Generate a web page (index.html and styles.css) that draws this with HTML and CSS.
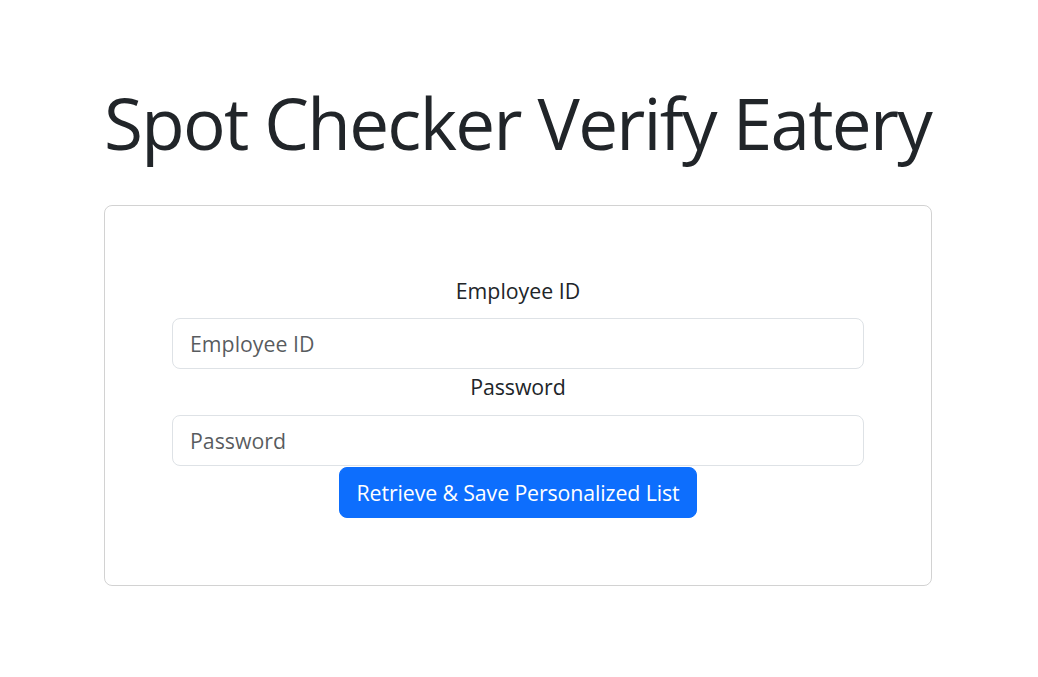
FILE: index.html
```html
<!DOCTYPE html>
<html lang="en">
<head>
<meta charset="utf-8">
<title>Spot Checker Verify Eatery</title>
<link rel="stylesheet" href="styles.css">
</head>
<body>
<main class="container">
  <h1 class="title">Spot Checker Verify Eatery</h1>
  <section class="card">
    <form class="login-form">
      <label class="form-label first" for="empid">Employee ID</label>
      <input class="form-control" id="empid" type="text" placeholder="Employee ID">
      <label class="form-label second" for="pwd">Password</label>
      <input class="form-control" id="pwd" type="password" placeholder="Password">
      <button class="btn-primary" type="button">Retrieve &amp; Save Personalized List</button>
    </form>
  </section>
</main>
</body>
</html>
```

FILE: styles.css
```css
html, body {
  margin: 0;
  padding: 0;
  background: #ffffff;
}

body {
  font-family: "Open Sans", "Noto Sans", "Liberation Sans", sans-serif;
  color: #212529;
  font-size: 21.33px;
  line-height: 1.5;
}

.container {
  width: 828px;
  margin-left: 104px;
}

.title {
  margin: 0;
  padding-top: 80px;
  font-size: 71px;
  font-weight: 400;
  line-height: 1.2;
  letter-spacing: -1.7px;
  height: 125px;
}

.card {
  box-sizing: border-box;
  border: 1px solid rgba(0, 0, 0, 0.175);
  border-radius: 8px;
  padding: 69px 67px 67px;
}

.login-form {
  display: flex;
  flex-direction: column;
  align-items: stretch;
}

.form-label {
  display: block;
  text-align: center;
  height: 32px;
  line-height: 32px;
}

.form-label.first {
  margin-bottom: 10.5px;
}

.form-label.second {
  margin-top: 2px;
  margin-bottom: 12.5px;
  letter-spacing: -0.1px;
}

.form-control {
  box-sizing: border-box;
  display: block;
  width: 100%;
  height: 51px;
  margin: 0;
  padding: 8px 17px;
  font-family: inherit;
  font-size: 21.33px;
  color: #212529;
  background: #ffffff;
  border: 1px solid #dee2e6;
  border-radius: 8px;
  outline: none;
}

.form-control::placeholder {
  color: rgba(33, 37, 41, 0.75);
  opacity: 1;
}

.btn-primary {
  align-self: center;
  box-sizing: border-box;
  margin-top: 1px;
  height: 51px;
  padding: 0 16.5px;
  font-family: inherit;
  font-size: 21.33px;
  letter-spacing: -0.12px;
  color: #ffffff;
  background: #0d6efd;
  border: 1px solid #0d6efd;
  border-radius: 8px;
  cursor: pointer;
}
```
